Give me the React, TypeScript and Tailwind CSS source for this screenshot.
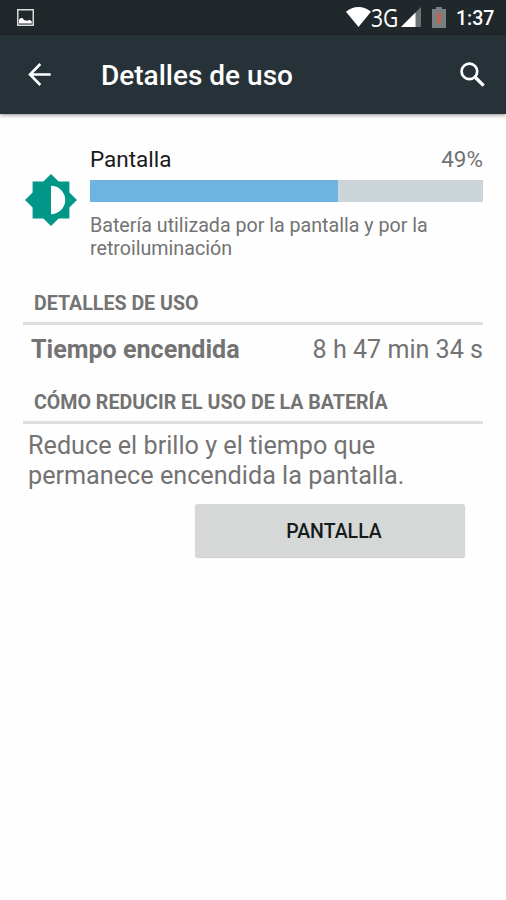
import type { ReactNode } from "react";

const usage = {
  name: "Pantalla",
  percent: 49,
  barFill: 63,
  description: "Batería utilizada por la pantalla y por la retroiluminación",
  timeOn: "8 h 47 min 34 s",
};

function StatusBar() {
  return (
    <div className="flex h-[35px] items-start bg-[#21282c] pl-[17px] pr-[11.5px] text-white">
      <svg className="mt-[9px] h-[17px] w-[17px]" viewBox="0 0 17 17">
        <rect x="0.75" y="0.75" width="15.5" height="15.5" fill="none" stroke="#d9dcdd" strokeWidth="1.5" />
        <path d="M2 14.5V11.3C2.6 8.6 5.4 8.2 6.6 10.4L7.6 11.6C8.6 10.6 9.6 11.6 10.2 12.1C11.4 10.4 13.6 10.6 14.8 12.6V14.5Z" fill="#fff" />
      </svg>

      <div className="ml-auto flex items-start">
        <svg className="mt-[7px] h-[20px] w-[25px]" viewBox="0 0 25 20">
          <path d="M0 4.8C7-1.5 18-1.5 25 4.8L12.5 20Z" fill="#fff" />
        </svg>
        <div className="h-[35px] w-[30px]">
          <span className="block origin-left scale-x-[0.84] whitespace-nowrap font-['Open_Sans',sans-serif] text-[25px] leading-[35px]">3G</span>
        </div>
        <svg className="mt-[7px] h-[20px] w-[20px]" viewBox="0 0 20 20">
          <path d="M0 20L20 0V20Z" fill="#6d7275" />
          <path d="M0 20L14.5 5.5V20Z" fill="#fff" />
        </svg>
        <svg className="ml-[11px] mt-[7px] h-[21px] w-[14px]" viewBox="0 0 14 21">
          <path d="M4 0H10V2H14V21H0V2H4Z" fill="#7a7f81" />
          <path d="M5 6H9L8.6 16.5H5.4Z" fill="#c9624a" />
        </svg>
        <span className="ml-[10px] whitespace-nowrap text-[19.6px] font-medium leading-[37px]">1:37</span>
      </div>
    </div>
  );
}

function AppBar() {
  return (
    <header className="flex h-[79px] items-center bg-[#263238] pl-[28px] pr-[21.5px] text-white shadow-[0_1px_4px_rgba(0,0,0,0.45)]">
      <svg className="h-[23px] w-[23px]" viewBox="0 0 23 23">
        <path d="M12.3 1L2 11.5L12.3 22M2 11.5H22.7" fill="none" stroke="#fff" strokeWidth="2.6" />
      </svg>
      <h1 className="ml-[50px] mt-[2px] whitespace-nowrap text-[28px] font-medium leading-[32px]">Detalles de uso</h1>
      <svg className="ml-auto h-[25px] w-[25px]" viewBox="0 0 25 25">
        <circle cx="9.4" cy="9.4" r="7.8" fill="none" stroke="#fff" strokeWidth="2.7" />
        <path d="M15.2 15.2L23.6 23.6" stroke="#fff" strokeWidth="3.4" />
      </svg>
    </header>
  );
}

function BrightnessIcon() {
  return (
    <svg className="mt-[28px] h-[52px] w-[52px] shrink-0" viewBox="0 0 52 52">
      <path d="M26 0L33.6 7.6H44.4V18.4L52 26L44.4 33.6V44.4H33.6L26 52L18.4 44.4H7.6V33.6L0 26L7.6 18.4V7.6H18.4Z" fill="#009688" />
      <path d="M26 11.8A14.2 14.2 0 0 1 26 40.2Z" fill="#fff" />
    </svg>
  );
}

function SectionTitle({ children }: { children: ReactNode }) {
  return (
    <h2 className="whitespace-nowrap border-b-[3px] border-[#dedede] pb-[7px] pl-[11px] text-[19.6px] font-bold leading-[23px] text-[#737373]">
      {children}
    </h2>
  );
}

export default function App() {
  return (
    <div className="h-[900px] w-[506px] overflow-hidden bg-[#fefefe] font-['Roboto',sans-serif] text-[#737373]">
      <StatusBar />
      <AppBar />

      <main className="px-[23px] pt-[32px]">
        <div className="flex pl-[1.5px]">
          <BrightnessIcon />
          <div className="ml-[13.5px] flex-1">
            <div className="flex justify-between text-[22.5px] leading-[27px]">
              <span className="text-[#1a1a1a]">{usage.name}</span>
              <span>{usage.percent}%</span>
            </div>
            <div className="mt-[6.5px] h-[22.5px] bg-[#ccd5d9]">
              <div className="h-full bg-[#6eb4e1]" style={{ width: `${usage.barFill}%` }} />
            </div>
            <p className="mt-[12px] w-[360px] text-[19.65px] leading-[23px]">{usage.description}</p>
          </div>
        </div>

        <section className="mt-[32px]">
          <SectionTitle>DETALLES DE USO</SectionTitle>
          <div className="mt-[10px] flex justify-between whitespace-nowrap pl-[8px] text-[25.1px] leading-[30px]">
            <span className="font-bold">Tiempo encendida</span>
            <span>{usage.timeOn}</span>
          </div>
        </section>

        <section className="mt-[26px]">
          <SectionTitle>CÓMO REDUCIR EL USO DE LA BATERÍA</SectionTitle>
          <p className="mt-[7px] w-[400px] pl-[5px] text-[25.2px] leading-[29.5px]">
            Reduce el brillo y el tiempo que permanece encendida la pantalla.
          </p>
          <button className="ml-[171.5px] mt-[14px] block h-[53px] w-[270px] rounded-[3px] bg-[#d5d8d7] pl-[9px] pt-[2px] text-[19.5px] font-medium text-[#161a1a] shadow-[0_1px_1px_rgba(0,0,0,0.2)]">
            PANTALLA
          </button>
        </section>
      </main>
    </div>
  );
}
